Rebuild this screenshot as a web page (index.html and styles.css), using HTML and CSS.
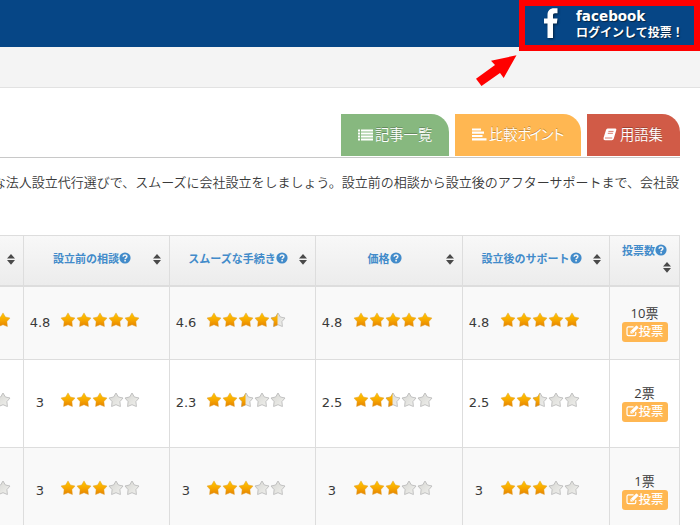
FILE: index.html
```
<!DOCTYPE html>
<html lang="ja">
<head>
<meta charset="utf-8">
<title>法人設立代行 比較</title>
<link rel="stylesheet" href="styles.css">
</head>
<body>
<svg class="defs" aria-hidden="true">
  <defs>
    <linearGradient id="gold" x1="0" y1="0" x2="0" y2="1"><stop offset="0" stop-color="#ffc900"/><stop offset=".55" stop-color="#f7a600"/><stop offset="1" stop-color="#e48200"/></linearGradient>
    <linearGradient id="silver" x1="0" y1="0" x2="1" y2="1"><stop offset="0" stop-color="#d6d6d2"/><stop offset="1" stop-color="#f1f1ee"/></linearGradient>
    <clipPath id="left"><rect width="7.5" height="16"/></clipPath>
    <symbol id="on" viewBox="0 0 16 16"><path d="M8 .9 10.4 5 15 6 11.9 9.6 12.4 14.5 8 12.7 3.6 14.5 4.1 9.6 1 6 5.6 5Z" fill="url(#gold)" stroke="#e0a030" stroke-width=".8" stroke-opacity=".6"/></symbol>
    <symbol id="off" viewBox="0 0 16 16"><path d="M8 1 10.4 5 15 6 11.9 9.6 12.4 14.5 8 12.7 3.6 14.5 4.1 9.6 1 6 5.6 5Z" fill="url(#silver)" stroke="#bcbcbc" stroke-width=".9"/></symbol>
    <symbol id="half" viewBox="0 0 16 16"><use href="#off" width="16" height="16"/><g clip-path="url(#left)"><use href="#on" width="16" height="16"/></g></symbol>
    <symbol id="help" viewBox="0 0 12 12"><circle cx="6" cy="6" r="5.6" fill="#428bca"/><path d="M4.1 4.7C4.2 2.6 7.9 2.6 7.9 4.6 7.9 5.8 6.1 5.9 6.1 7.2" fill="none" stroke="#f4f4f4" stroke-width="1.5"/><rect x="5.3" y="8" width="1.6" height="1.5" fill="#f4f4f4"/></symbol>
    <symbol id="sort" viewBox="0 0 8 11"><path d="M4 0 8 4.6H0ZM0 6.1H8L4 10.7Z" fill="#4a4a4a"/></symbol>
    <symbol id="edit" viewBox="0 0 13 12"><path d="M9.8 7V9.2Q9.8 10.6 8.4 10.6H2.4Q1 10.6 1 9.2V3.3Q1 1.9 2.4 1.9H7.6" fill="none" stroke="#fff" stroke-width="1.2"/><path d="M4.4 8.6V6.2L10 .7Q10.5.2 11 .7L12.2 1.9Q12.7 2.4 12.2 2.9L6.7 8.6Z" fill="#fff"/><path d="M5.4 6.5 6.6 7.7" stroke="#ffb650" stroke-width=".7"/></symbol>
  </defs>
</svg>

<header class="topbar">
  <a class="fb">
    <svg class="fb-mark" viewBox="0 0 16 32"><path d="M4.5 31V16.5H1V11.5H4.5V8C4.5 3.4 7 1.2 11 1.2H14.5V6.2H12C10.5 6.2 10 6.9 10 8.3V11.5H14.5L13.8 16.5H10V31Z" fill="#fff"/></svg>
    <span class="fb-text"><b class="fb-name">facebook</b><b class="fb-login">ログインして投票！</b></span>
  </a>
</header>
<div class="subbar"></div>
<svg class="arrow" viewBox="0 0 42 34"><path d="M41.5 1.3 28.7 24 25 19 6.5 32 1 24.7 20 11 16 6.7Z" fill="#f00"/></svg>

<main>
  <nav class="tabs">
    <a class="tab green"><svg width="15" height="12" viewBox="0 0 15 12"><path d="M0 1.5H2M3 1.5H15M0 4.5H2M3 4.5H15M0 7.5H2M3 7.5H15M0 10.5H2M3 10.5H15" stroke="#fff" stroke-width="2"/></svg><span class="t1">記事一覧</span></a>
    <a class="tab orange"><svg width="15" height="13" viewBox="0 0 15 13"><path d="M0 1.5H9M0 4.7H12M0 8H10.5M0 11.3H14.5" stroke="#fff" stroke-width="2.2"/></svg><span class="t2">比較<span class="kana">ポイント</span></span></a>
    <a class="tab red"><svg width="14" height="13" viewBox="0 0 14 13"><path d="M4.6.5H12.4Q13.8.7 13.3 2.1L10.8 10.6Q10.4 12.2 8.8 12.2H2Q.2 12.2.5 10L3 2Q3.5.6 4.6.5Z" fill="#fff"/><path d="M5.4 3.4H10.5M4.8 5.3H9.9M2 10H9.2" stroke="#d15b47" stroke-width=".8"/></svg><span class="t3">用語集</span></a>
  </nav>
  <p class="lead"><span>な法人設立代行選びで、スムーズに会社設立をしましょう。設立前の相談から設立後のアフターサポートまで、会社設</span></p>

  <section class="grid">
    <div class="th first"><svg class="sort"><use href="#sort"/></svg></div>
    <div class="th"><span class="name">設立前の相談<svg class="help"><use href="#help"/></svg></span><svg class="sort"><use href="#sort"/></svg></div>
    <div class="th"><span class="name">スムーズな手続き<svg class="help"><use href="#help"/></svg></span><svg class="sort"><use href="#sort"/></svg></div>
    <div class="th"><span class="name">価格<svg class="help"><use href="#help"/></svg></span><svg class="sort"><use href="#sort"/></svg></div>
    <div class="th"><span class="name">設立後のサポート<svg class="help"><use href="#help"/></svg></span><svg class="sort"><use href="#sort"/></svg></div>
    <div class="th votes"><span class="name">投票数<svg class="help"><use href="#help"/></svg></span><svg class="sort"><use href="#sort"/></svg></div>

    <div class="td odd r1 first"><span class="stars"><svg><use href="#on"/></svg></span></div>
    <div class="td odd r1"><span class="num">4.8</span><span class="stars"><svg><use href="#on"/></svg><svg><use href="#on"/></svg><svg><use href="#on"/></svg><svg><use href="#on"/></svg><svg><use href="#on"/></svg></span></div>
    <div class="td odd r1"><span class="num">4.6</span><span class="stars"><svg><use href="#on"/></svg><svg><use href="#on"/></svg><svg><use href="#on"/></svg><svg><use href="#on"/></svg><svg><use href="#half"/></svg></span></div>
    <div class="td odd r1 wide"><span class="num">4.8</span><span class="stars"><svg><use href="#on"/></svg><svg><use href="#on"/></svg><svg><use href="#on"/></svg><svg><use href="#on"/></svg><svg><use href="#on"/></svg></span></div>
    <div class="td odd r1 wide"><span class="num">4.8</span><span class="stars"><svg><use href="#on"/></svg><svg><use href="#on"/></svg><svg><use href="#on"/></svg><svg><use href="#on"/></svg><svg><use href="#on"/></svg></span></div>
    <div class="vote odd r1"><span class="count">10票</span><a class="btn"><svg><use href="#edit"/></svg>投票</a></div>

    <div class="td r2 first"><span class="stars"><svg><use href="#off"/></svg></span></div>
    <div class="td r2"><span class="num">3</span><span class="stars"><svg><use href="#on"/></svg><svg><use href="#on"/></svg><svg><use href="#on"/></svg><svg><use href="#off"/></svg><svg><use href="#off"/></svg></span></div>
    <div class="td r2"><span class="num">2.3</span><span class="stars"><svg><use href="#on"/></svg><svg><use href="#on"/></svg><svg><use href="#half"/></svg><svg><use href="#off"/></svg><svg><use href="#off"/></svg></span></div>
    <div class="td r2 wide"><span class="num">2.5</span><span class="stars"><svg><use href="#on"/></svg><svg><use href="#on"/></svg><svg><use href="#half"/></svg><svg><use href="#off"/></svg><svg><use href="#off"/></svg></span></div>
    <div class="td r2 wide"><span class="num">2.5</span><span class="stars"><svg><use href="#on"/></svg><svg><use href="#on"/></svg><svg><use href="#half"/></svg><svg><use href="#off"/></svg><svg><use href="#off"/></svg></span></div>
    <div class="vote r2"><span class="count">2票</span><a class="btn"><svg><use href="#edit"/></svg>投票</a></div>

    <div class="td odd r2 first"><span class="stars"><svg><use href="#off"/></svg></span></div>
    <div class="td odd r2"><span class="num">3</span><span class="stars"><svg><use href="#on"/></svg><svg><use href="#on"/></svg><svg><use href="#on"/></svg><svg><use href="#off"/></svg><svg><use href="#off"/></svg></span></div>
    <div class="td odd r2"><span class="num">3</span><span class="stars"><svg><use href="#on"/></svg><svg><use href="#on"/></svg><svg><use href="#on"/></svg><svg><use href="#off"/></svg><svg><use href="#off"/></svg></span></div>
    <div class="td odd r2 wide"><span class="num">3</span><span class="stars"><svg><use href="#on"/></svg><svg><use href="#on"/></svg><svg><use href="#on"/></svg><svg><use href="#off"/></svg><svg><use href="#off"/></svg></span></div>
    <div class="td odd r2 wide"><span class="num">3</span><span class="stars"><svg><use href="#on"/></svg><svg><use href="#on"/></svg><svg><use href="#on"/></svg><svg><use href="#off"/></svg><svg><use href="#off"/></svg></span></div>
    <div class="vote odd r2"><span class="count">1票</span><a class="btn"><svg><use href="#edit"/></svg>投票</a></div>
  </section>
</main>
</body>
</html>
```
FILE: styles.css
```
* { box-sizing: border-box; }
html, body { height: 525px; overflow: hidden; }
body {
  margin: 0;
  background: #fff;
  color: #393939;
  font-family: "DejaVu Sans", "Noto Sans CJK JP", sans-serif;
  font-size: 13px;
}
.defs { position: absolute; width: 0; height: 0; }
svg { display: block; flex: none; }

.topbar { height: 47px; background: #064686; display: flex; justify-content: flex-end; }
.fb {
  width: 181px; height: 51px; flex: none;
  border: 6px solid #f00;
  background: #064686;
  display: flex;
  padding: 1px 0 0 18px;
  color: #fff;
  z-index: 1;
}
.fb-mark { width: 16px; height: 32px; filter: drop-shadow(1px 1px 1px rgba(0,0,0,.5)); }
.fb-text { display: flex; flex-direction: column; margin-left: 17px; white-space: nowrap; text-shadow: 1px 1px 1px rgba(0,0,0,.5); }
.fb-name { font: bold 13.5px/18px "DejaVu Sans", sans-serif; }
.fb-login { font: bold 12px/14px "Noto Sans CJK JP", sans-serif; }
.subbar { height: 41px; background: #f4f4f4; border-bottom: 1px solid #e2e2e2; }
.arrow { position: absolute; left: 475px; top: 54px; width: 42px; height: 34px; }

.tabs {
  display: flex; justify-content: flex-end; gap: 6px;
  width: 680px; height: 70px;
  padding-top: 26px;
  border-bottom: 1px solid #c8c8c8;
}
.tab {
  height: 42px;
  display: flex; align-items: center;
  border-top-right-radius: 18px;
  color: #fff;
  font: 350 14.3px/20px "Noto Sans CJK JP", sans-serif;
  text-shadow: 0 -1px 0 rgba(0,0,0,.25);
  white-space: nowrap;
}
.tab span { margin-top: -2px; }
.tab svg { margin-top: -1px; }
.green { width: 108px; padding-left: 17px; background: #87b87f; }
.orange { width: 126px; padding-left: 17px; background: #ffb752; }
.red { width: 93px; padding-left: 16px; background: #d15b47; }
.t1 { margin-left: 2px; }
.t2 { margin-left: 2px; }
.t3 { margin-left: 3px; }
.kana { letter-spacing: -3.1px; }

.lead {
  display: flex; justify-content: flex-end;
  width: 679px; height: 77px;
  margin: 0; padding-top: 14px;
  font: 350 13px/20px "Noto Sans CJK JP", sans-serif;
  color: #393939;
  white-space: nowrap;
}

.grid {
  display: grid;
  grid-template-columns: 24px 146px 146px 147px 147px 70px;
  grid-template-rows: 52px 73px 88px 88px;
  width: 680px;
}
.grid > div { border-right: 1px solid #ddd; border-bottom: 1px solid #ddd; overflow: hidden; }
.grid > .th {
  display: flex; align-items: center;
  border-top: 1px solid #ddd; border-bottom: 2px solid #ddd;
  background: linear-gradient(#f8f8f8, #ececec);
  padding: 0 8px 3px 7px;
}
.name {
  flex: 1;
  display: flex; justify-content: center; align-items: center;
  margin-top: -2px;
  color: #428bca;
  font: bold 11px/18px "Noto Sans CJK JP", sans-serif;
  white-space: nowrap;
}
.help { width: 12px; height: 12px; }
.sort { width: 8px; height: 11px; margin-top: 1px; }
.grid > .th.first { padding-left: 7px; }
.grid > .th.votes { flex-direction: column; padding: 7px 8px 0; }
.votes .name { flex: none; }
.votes .sort { align-self: flex-end; margin-top: 3px; }

.td { display: flex; align-items: flex-start; background: #fff; }
.grid > .odd { background: #f9f9f9; }
.num { width: 32px; text-align: center; line-height: 16px; flex: none; margin-top: 3px; }
.stars { display: flex; margin-left: 4px; }
.wide .stars { margin-left: 5px; }
.stars svg { width: 16px; height: 16px; }
.r1 { padding-top: 25px; }
.r2 { padding-top: 32px; }
.first .stars { margin-left: -5px; }

.vote { display: flex; flex-direction: column; align-items: center; background: #fff; }
.grid > .vote.r1 { padding-top: 17px; }
.grid > .vote.r2 { padding-top: 24px; }
.count { height: 18px; font: 13px/18px "Open Sans", "Noto Sans CJK JP", sans-serif; }
.btn {
  width: 46px; height: 20px;
  margin-left: 1px;
  padding-bottom: 2px;
  display: flex; align-items: center; justify-content: center;
  border-radius: 3px;
  background: #ffb752;
  color: #fff;
  font: 500 12.5px/18px "Noto Sans CJK JP", sans-serif;
  white-space: nowrap;
}
.btn svg { width: 13px; height: 12px; margin-right: -1px; }
```
